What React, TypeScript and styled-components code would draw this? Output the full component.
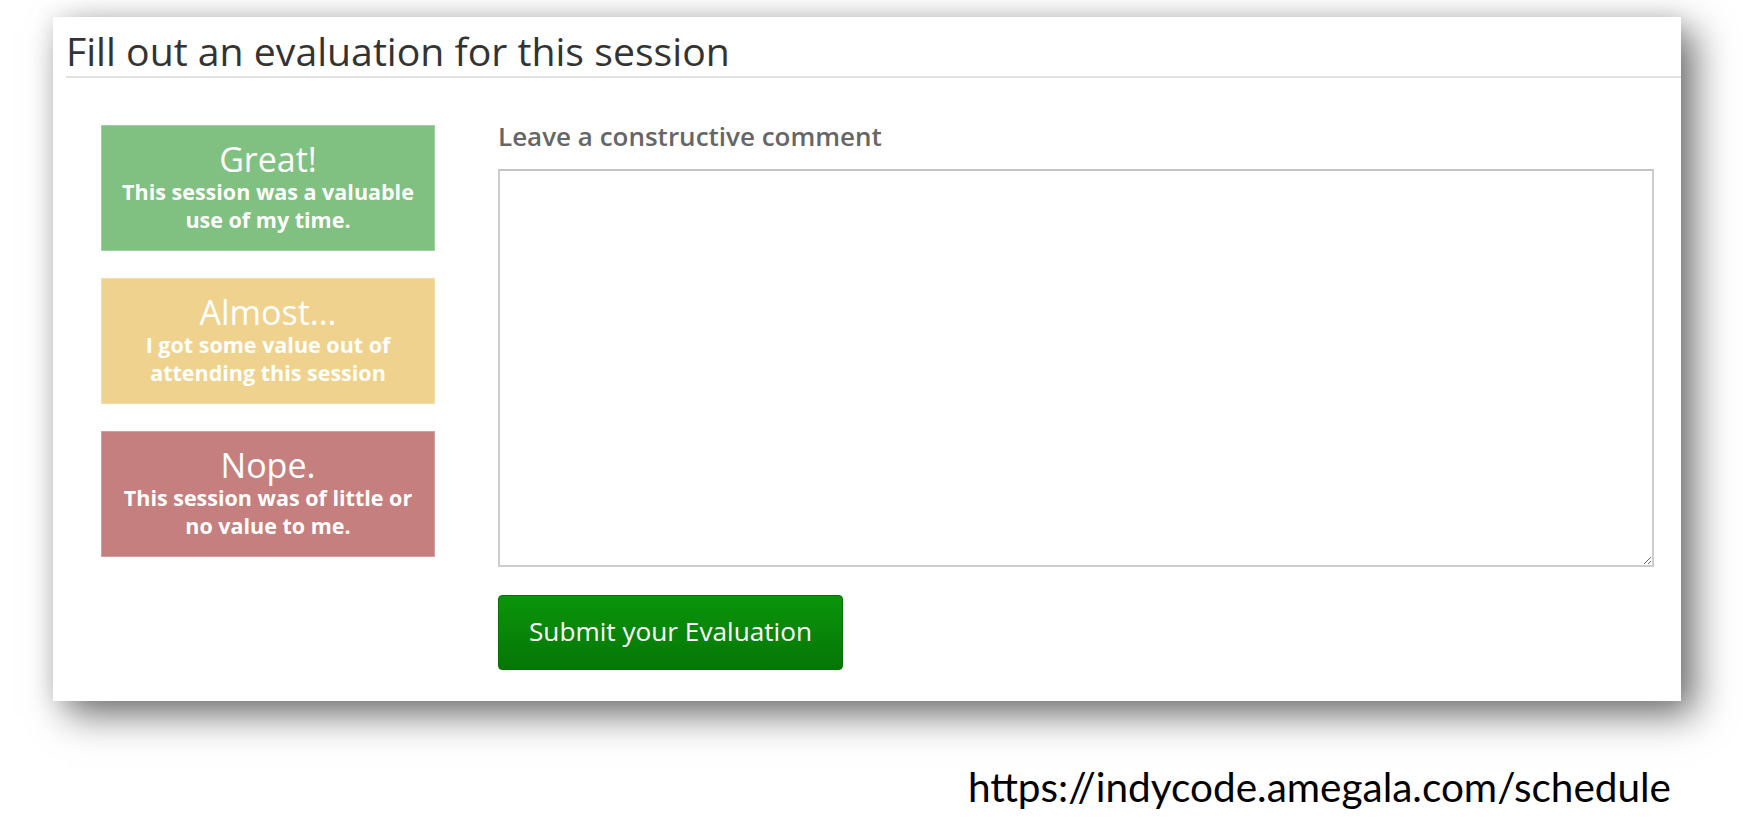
import React, { FC } from 'react';
import styled, { createGlobalStyle } from 'styled-components';

const GlobalStyle = createGlobalStyle`
  html, body {
    margin: 0;
    padding: 0;
    background: #fff;
  }
  body {
    font-family: 'Open Sans', 'Noto Sans', sans-serif;
  }
`;

const Page = styled.div`
  width: 1743px;
  height: 834px;
  padding: 17px 0 0 53px;
  box-sizing: border-box;
  display: flex;
  flex-direction: column;
`;

const Card = styled.section`
  width: 1628px;
  height: 684px;
  background: #fff;
  box-shadow: 14px 14px 36px rgba(0, 0, 0, 0.55), 0 0 22px rgba(0, 0, 0, 0.1);
  box-sizing: border-box;
  display: flex;
  flex-direction: column;
`;

const Header = styled.div`
  margin-left: 13px;
  padding: 13px 0 4px 0;
  border-bottom: 2px solid #e1e1e1;
`;

const Title = styled.h2`
  margin: 0;
  font-size: 39.2px;
  line-height: 42px;
  font-weight: 400;
  color: #333;
`;

const Body = styled.div`
  display: flex;
  gap: 63px;
  padding: 47px 27px 0 48px;
`;

const Ratings = styled.div`
  width: 334px;
  display: flex;
  flex-direction: column;
  gap: 27px;
  flex-shrink: 0;
`;

const RatingButton = styled.button<{ $bg: string }>`
  height: 126px;
  padding: 14px 10px 0;
  border: 1px solid rgba(255, 255, 255, 0.25);
  background: ${(p) => p.$bg};
  color: #fff;
  font-family: 'Open Sans', sans-serif;
  text-align: center;
  display: flex;
  flex-direction: column;
  align-items: center;
  box-sizing: border-box;
  cursor: pointer;
`;

const RatingTitle = styled.span`
  font-size: 34px;
  line-height: 38px;
  font-weight: 400;
`;

const RatingText = styled.span`
  font-size: 21.5px;
  line-height: 28px;
  font-weight: 700;
`;

const CommentColumn = styled.div`
  flex: 1;
  display: flex;
  flex-direction: column;
`;

const Label = styled.label`
  font-size: 26px;
  line-height: 32px;
  font-weight: 600;
  color: #666;
  margin-top: -5px;
  margin-bottom: 17px;
`;

const Comment = styled.textarea`
  height: 398px;
  border: 2px solid #cdcdcd;
  border-top-color: #c4c4c4;
  box-sizing: border-box;
  font-family: 'Open Sans', sans-serif;
  font-size: 18px;
  padding: 8px;
  resize: vertical;
  outline: none;
`;

const SubmitButton = styled.button`
  align-self: flex-start;
  margin-top: 28px;
  width: 345px;
  height: 75px;
  padding: 0 0 3px;
  border: 1px solid #066f06;
  border-radius: 4px;
  background: linear-gradient(#0a950a, #067606);
  color: #fff;
  font-family: 'Open Sans', sans-serif;
  font-size: 26.2px;
  font-weight: 400;
  cursor: pointer;
`;

const Footer = styled.div`
  display: flex;
  justify-content: flex-end;
  padding-right: 72px;
  margin-top: 64px;
`;

const Url = styled.span`
  font-family: Lato, 'Open Sans', sans-serif;
  font-size: 40.5px;
  line-height: 44px;
  color: #000;
`;

const ratings = [
  { bg: '#80c080', title: 'Great!', text: ['This session was a valuable', 'use of my time.'] },
  { bg: '#eed28e', title: 'Almost...', text: ['I got some value out of', 'attending this session'] },
  { bg: '#c47f7e', title: 'Nope.', text: ['This session was of little or', 'no value to me.'] },
];

const App: FC = () => (
  <>
    <GlobalStyle />
    <Page>
      <Card>
        <Header>
          <Title>Fill out an evaluation for this session</Title>
        </Header>
        <Body>
          <Ratings>
            {ratings.map((r) => (
              <RatingButton key={r.title} $bg={r.bg}>
                <RatingTitle>{r.title}</RatingTitle>
                {r.text.map((t) => (
                  <RatingText key={t}>{t}</RatingText>
                ))}
              </RatingButton>
            ))}
          </Ratings>
          <CommentColumn>
            <Label htmlFor="comment">Leave a constructive comment</Label>
            <Comment id="comment" />
            <SubmitButton>Submit your Evaluation</SubmitButton>
          </CommentColumn>
        </Body>
      </Card>
      <Footer>
        <Url>https://indycode.amegala.com/schedule</Url>
      </Footer>
    </Page>
  </>
);

export default App;
